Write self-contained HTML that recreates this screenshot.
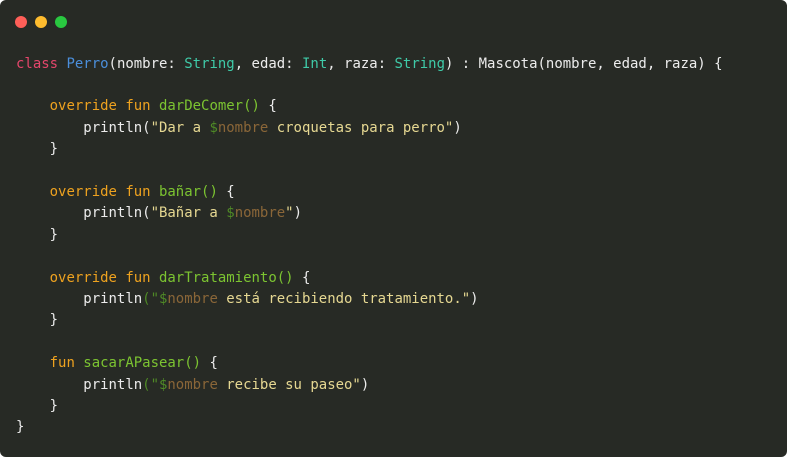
<!DOCTYPE html>
<html><head><style>
html,body{margin:0;padding:0;background:#fff;}
.w{position:relative;width:787px;height:457px;background:#272a25;border-radius:6px;overflow:hidden;}
.d{position:absolute;top:16px;width:12px;height:12px;border-radius:50%;}
pre{position:absolute;left:16px;top:53.5px;margin:0;font-family:"DejaVu Sans Mono","Liberation Mono",monospace;font-size:13.97px;line-height:21.4px;color:#ececec;}
.k{color:#e4466b}.c{color:#4b8fdc}.t{color:#3fcaa8}.o{color:#eea21f}.f{color:#7cc431}.s{color:#e6d892}.v{color:#8a6638}.g{color:#4f8a26}
</style></head><body><div class="w">
<div class="d" style="left:15px;background:#fe5f58"></div>
<div class="d" style="left:35px;background:#febc2e"></div>
<div class="d" style="left:55px;background:#29c840"></div>
<pre><span class="k">class</span> <span class="c">Perro</span>(nombre: <span class="t">String</span>, edad: <span class="t">Int</span>, raza: <span class="t">String</span>) : Mascota(nombre, edad, raza) {

    <span class="o">override fun</span> <span class="f">darDeComer()</span> {
        println(<span class="s">"Dar a </span><span class="g">$</span><span class="v">nombre</span><span class="s"> croquetas para perro"</span>)
    }

    <span class="o">override fun</span> <span class="f">bañar()</span> {
        println(<span class="s">"Bañar a </span><span class="g">$</span><span class="v">nombre</span><span class="s">"</span>)
    }

    <span class="o">override fun</span> <span class="f">darTratamiento()</span> {
        println<span class="g">("$</span><span class="v">nombre</span><span class="s"> está recibiendo tratamiento."</span>)
    }

    <span class="o">fun</span> <span class="f">sacarAPasear()</span> {
        println<span class="g">("$</span><span class="v">nombre</span><span class="s"> recibe su paseo"</span>)
    }
}</pre>
</div></body></html>
